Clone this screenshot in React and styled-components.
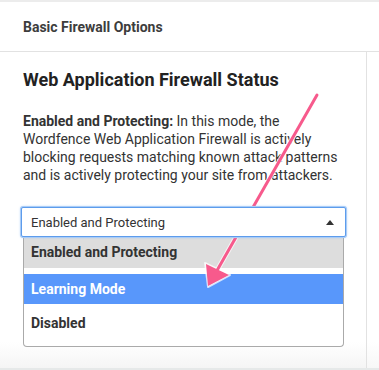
import React from 'react';
import styled, { createGlobalStyle } from "styled-components"

const GlobalStyle = createGlobalStyle`
  html, body {
    margin: 0;
    padding: 0;
    background: #fff;
  }
  body {
    font-family: Roboto, "Liberation Sans", sans-serif;
    color: #333;
  }
`

const Page = styled.div`
position: relative;
width: 379px;
height: 370px;
overflow: hidden;
background: #fff;
border-top: 2px solid #ececec;
box-sizing: border-box;
display: flex;
flex-direction: column;
`

const Header = styled.div`
height: 49px;
flex: none;
display: flex;
align-items: center;
padding-left: 23px;
border-bottom: 1px solid #e2e2e2;
font-size: 14px;
font-weight: 700;
color: #3d3d3d;
`

const Body = styled.div`
display: flex;
height: 316px;
flex: none;
border-bottom: 2px solid #e6e9e9;
`

const Main = styled.div`
width: 367px;
box-sizing: border-box;
padding: 17px 0 0 23px;
border-right: 1px solid #e2e2e2;
background: linear-gradient(to bottom, #fff 0, #fff 290px, #f5f5f5 100%);
`

const Side = styled.div`
flex: 1;
background: linear-gradient(to bottom, #fff 0, #fff 290px, #f7f7f7 100%);
`

const Title = styled.h2`
margin: 0;
font-size: 18px;
line-height: 22px;
font-weight: 700;
color: #222;
`

const Description = styled.p`
margin: 21px 0 0;
width: 340px;
font-size: 14px;
line-height: 18px;
color: #333;
white-space: nowrap;
strong {
  font-weight: 700;
}
`

const SelectWrap = styled.div`
margin: 23px 0 0 -2px;
width: 325px;
`

const SelectBox = styled.div`
height: 30px;
box-sizing: border-box;
border: 1px solid #5d9cec;
box-shadow: 0 0 0 1px #a9ccf7, 0 0 3px #8cbaf2;
border-radius: 2px;
display: flex;
align-items: center;
justify-content: space-between;
padding: 0 11px 0 9px;
font-size: 13px;
color: #333;
background: #fff;
position: relative;
z-index: 1;
`

const Caret = styled.span`
width: 0;
height: 0;
border-left: 4px solid transparent;
border-right: 4px solid transparent;
border-bottom: 5px solid #333;
`

const List = styled.div`
margin: 0 2px 0 2px;
border: 1px solid #aaa;
border-top: none;
border-radius: 0 0 4px 4px;
background: #fff;
padding-bottom: 4px;
`

const Option = styled.div`
height: ${p => p.$height || 30}px;
line-height: ${p => p.$height || 30}px;
margin-bottom: ${p => p.$gap || 0}px;
padding-left: 7px;
font-size: 14px;
font-weight: 700;
color: ${p => p.$active ? "#fff" : "#333"};
background: ${p => p.$active ? "#5897fb" : p.$selected ? "#ddd" : "transparent"};
`

const Arrow = styled.svg`
position: absolute;
left: 0;
top: 0;
pointer-events: none;
`

export default function App() {
  return (
    <>
      <GlobalStyle />
      <Page>
        <Header>Basic Firewall Options</Header>
        <Body>
          <Main>
            <Title>Web Application Firewall Status</Title>
            <Description>
              <strong>Enabled and Protecting:</strong> In this mode, the<br />
              Wordfence Web Application Firewall is actively<br />
              blocking requests matching known attack patterns<br />
              and is actively protecting your site from attackers.
            </Description>
            <SelectWrap>
              <SelectBox>
                Enabled and Protecting
                <Caret />
              </SelectBox>
              <List>
                <Option $selected $height={31} $gap={6}>Enabled and Protecting</Option>
                <Option $active>Learning Mode</Option>
                <Option $height={38}>Disabled</Option>
              </List>
            </SelectWrap>
          </Main>
          <Side />
        </Body>
        <Arrow width="379" height="370" viewBox="0 0 379 370">
          <g stroke="#fff" strokeOpacity="0.7" fill="#fff" fillOpacity="0.7">
            <line x1="317" y1="93" x2="215" y2="272" strokeWidth="5" strokeLinecap="round" />
            <polygon points="208,285 205,261 230,273" strokeWidth="2" strokeLinejoin="round" />
          </g>
          <line x1="317" y1="93" x2="215" y2="272" stroke="#f75a8c" strokeWidth="3" strokeLinecap="round" />
          <polygon points="208,284 206,262 229,273" fill="#f75a8c" />
        </Arrow>
      </Page>
    </>
  );
}
